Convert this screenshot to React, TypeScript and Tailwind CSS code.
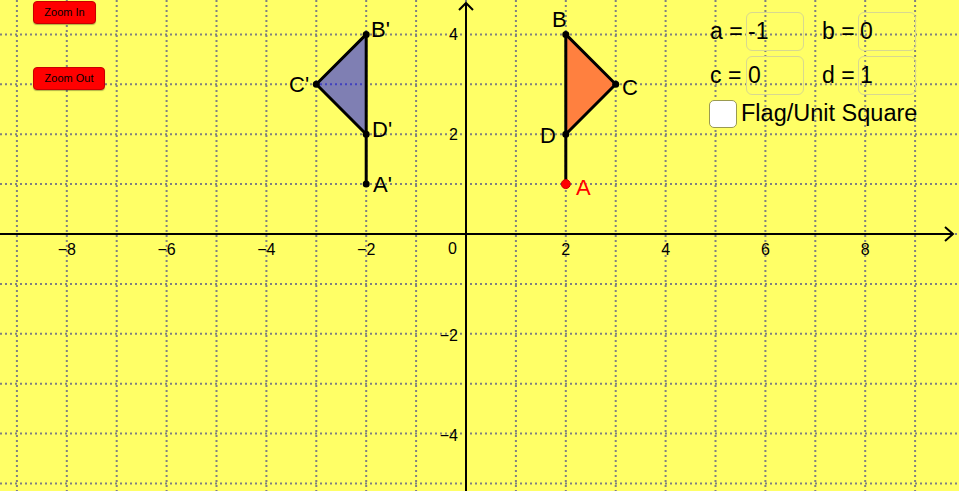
const U = 49.9
const OX = 466
const OY = 234
const px = (x: number) => OX + U * x
const py = (y: number) => OY - U * y

const font = '"Liberation Sans", Arial, sans-serif'

function Graph() {
  const vx = Array.from({ length: 19 }, (_, i) => i - 9)
  const hy = Array.from({ length: 10 }, (_, i) => i - 5)
  const pts = (list: [number, number][]) => list.map(([x, y]) => `${px(x)},${py(y)}`).join(' ')

  return (
    <svg width={959} height={491} className="absolute inset-0" style={{ fontFamily: font }}>
      {vx.map((k) => (
        <line key={'v' + k} x1={px(k)} y1={0} x2={px(k)} y2={491} stroke="#808080" strokeWidth={2} strokeDasharray="2 3" />
      ))}
      {hy.map((k) => (
        <line key={'h' + k} x1={0} y1={py(k)} x2={959} y2={py(k)} stroke="#808080" strokeWidth={2} strokeDasharray="2 3" />
      ))}

      {/* axes */}
      <line x1={0} y1={OY} x2={953} y2={OY} stroke="#000" strokeWidth={2} />
      <polyline points={`945,227 953,234 945,241`} fill="none" stroke="#000" strokeWidth={2} />
      <line x1={OX} y1={491} x2={OX} y2={3} stroke="#000" strokeWidth={2} />
      <polyline points={`459,10 466,3 473,10`} fill="none" stroke="#000" strokeWidth={2} />

      <g fontSize={16} fill="#000" textAnchor="middle">
        {[-8, -6, -4, -2, 2, 4, 6, 8].map((k) => (
          <text key={k} x={px(k)} y={255}>
            {k < 0 ? '\u2212' + -k : k}
          </text>
        ))}
      </g>
      <g fontSize={16} fill="#000" textAnchor="end">
        <text x={457} y={254}>0</text>
        <text x={458} y={40}>4</text>
        <text x={458} y={140}>2</text>
        <text x={458} y={341}>{'\u2212'}2</text>
        <text x={458} y={441}>{'\u2212'}4</text>
      </g>

      {/* image figure */}
      <polygon points={pts([[-2, 4], [-3, 3], [-2, 2]])} fill="#0000ff" fillOpacity={0.5} stroke="#000" strokeWidth={3} strokeLinejoin="round" />
      <line x1={px(-2)} y1={py(2)} x2={px(-2)} y2={py(1)} stroke="#000" strokeWidth={3} />

      {/* original figure */}
      <polygon points={pts([[2, 4], [3, 3], [2, 2]])} fill="#ff803f" stroke="#000" strokeWidth={3} strokeLinejoin="round" />
      <line x1={px(2)} y1={py(2)} x2={px(2)} y2={py(1)} stroke="#000" strokeWidth={3} />

      {([[-2, 4], [-3, 3], [-2, 2], [-2, 1], [2, 4], [3, 3], [2, 2]] as [number, number][]).map(([x, y]) => (
        <circle key={`${x}-${y}`} cx={px(x)} cy={py(y)} r={3.5} fill="#000" />
      ))}
      <circle cx={px(2)} cy={py(1)} r={4.5} fill="#ff0000" stroke="#cc0000" strokeWidth={1} />

      <g fontSize={22} fill="#000">
        <text x={371} y={37}>B'</text>
        <text x={289} y={92}>C'</text>
        <text x={372} y={137}>D'</text>
        <text x={373} y={192}>A'</text>
        <text x={552} y={27}>B</text>
        <text x={622} y={95}>C</text>
        <text x={540} y={143}>D</text>
        <text x={576} y={195} fill="#ff0000">A</text>
      </g>
    </svg>
  )
}

function ValueBox({ label, value }: { label: string; value: string }) {
  return (
    <div className="flex items-center">
      <span className="w-[36px] whitespace-nowrap">{label}</span>
      <div className="w-[58px] h-[39px] rounded-[6px] border border-[#d8d890] pl-[1px] flex items-center">{value}</div>
    </div>
  )
}

export default function App() {
  return (
    <div className="relative w-[959px] h-[491px] overflow-hidden bg-[#ffff66]" style={{ fontFamily: font }}>
      <Graph />

      <button className="absolute left-[33px] top-[1px] w-[63px] h-[23px] rounded-[4px] bg-[#ff0000] border border-[#c80000] text-[11px] text-black shadow-[0_1px_1px_rgba(0,0,0,0.3)]">
        Zoom In
      </button>
      <button className="absolute left-[33px] top-[67px] w-[72px] h-[23px] rounded-[4px] bg-[#ff0000] border border-[#c80000] text-[11px] text-black shadow-[0_1px_1px_rgba(0,0,0,0.3)]">
        Zoom Out
      </button>

      <div className="absolute left-[710px] top-[12px] flex flex-col gap-[5px] text-[23px] leading-none text-black">
        <div className="flex gap-[18px]">
          <ValueBox label="a =" value="-1" />
          <ValueBox label="b =" value="0" />
        </div>
        <div className="flex gap-[18px]">
          <ValueBox label="c =" value="0" />
          <ValueBox label="d =" value="1" />
        </div>
        <div className="flex items-center gap-[4px] -ml-[1px]">
          <div className="w-[28px] h-[28px] rounded-[5px] bg-white border border-[#9a9a50]" />
          <span className="text-[23.5px] whitespace-nowrap">Flag/Unit Square</span>
        </div>
      </div>
    </div>
  )
}
